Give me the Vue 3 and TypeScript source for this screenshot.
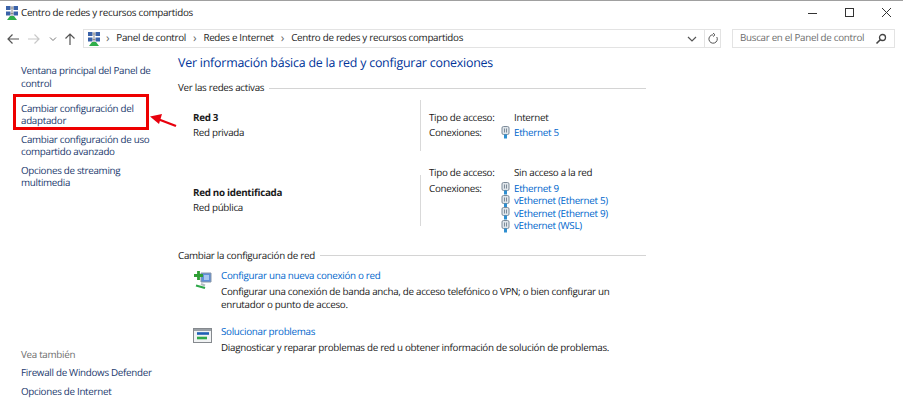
<template>
  <div class="window">
    <header class="titlebar">
      <svg class="net-icon" width="16" height="16" viewBox="0 0 16 16">
        <rect x="2" y="1" width="4.5" height="4" fill="#3a62a8" />
        <rect x="9.5" y="1" width="4.5" height="4" fill="#3a62a8" />
        <rect x="2" y="6.5" width="4.5" height="4" fill="#3a62a8" />
        <rect x="9.5" y="6.5" width="4.5" height="4" fill="#3a62a8" />
        <path d="M8 1v10M6.5 3h3M6.5 8.5h3" stroke="#8a8a8a" fill="none" />
        <path d="M6 11h4l3 4H3z" fill="#2fae4a" />
      </svg>
      <span class="title">Centro de redes y recursos compartidos</span>
      <div class="win-buttons">
        <svg width="12" height="12" viewBox="0 0 12 12"><path d="M1 6.5h9" stroke="#333" fill="none" /></svg>
        <svg width="12" height="12" viewBox="0 0 12 12"><rect x="1.5" y="1.5" width="8" height="8" stroke="#333" fill="none" /></svg>
        <svg width="12" height="12" viewBox="0 0 12 12"><path d="M1 1l9 9M10 1l-9 9" stroke="#333" fill="none" /></svg>
      </div>
    </header>

    <nav class="navbar">
      <div class="nav-arrows">
        <svg width="14" height="14" viewBox="0 0 14 14"><path d="M13 7H2M6.5 2.5L2 7l4.5 4.5" stroke="#555" stroke-width="1.2" fill="none" /></svg>
        <svg width="14" height="14" viewBox="0 0 14 14"><path d="M1 7h11M7.5 2.5L12 7l-4.5 4.5" stroke="#c8c8c8" stroke-width="1.2" fill="none" /></svg>
        <svg class="small-chev" width="8" height="8" viewBox="0 0 8 8"><path d="M1 2.5l3 3 3-3" stroke="#777" fill="none" /></svg>
        <svg width="14" height="14" viewBox="0 0 14 14"><path d="M7 13V2M2.5 6.5L7 2l4.5 4.5" stroke="#555" stroke-width="1.2" fill="none" /></svg>
      </div>
      <div class="address">
        <svg class="addr-icon" width="16" height="16" viewBox="0 0 16 16">
          <rect x="2" y="1" width="4.5" height="4" fill="#3a62a8" />
          <rect x="9.5" y="1" width="4.5" height="4" fill="#3a62a8" />
          <rect x="2" y="6.5" width="4.5" height="4" fill="#3a62a8" />
          <rect x="9.5" y="6.5" width="4.5" height="4" fill="#3a62a8" />
          <path d="M8 1v10M6.5 3h3M6.5 8.5h3" stroke="#8a8a8a" fill="none" />
          <path d="M6 11h4l3 4H3z" fill="#2fae4a" />
        </svg>
        <template v-for="crumb in crumbs" :key="crumb">
          <span class="crumb-sep">›</span>
          <span class="crumb">{{ crumb }}</span>
        </template>
        <svg class="addr-chev" width="10" height="8" viewBox="0 0 10 8"><path d="M1 2l4 4 4-4" stroke="#555" stroke-width="1.2" fill="none" /></svg>
        <span class="refresh">
          <svg width="12" height="12" viewBox="0 0 12 12"><path d="M9.8 4A4.2 4.2 0 1 1 6 1.8M6 0l2 1.8L6 3.6" stroke="#555" fill="none" /></svg>
        </span>
      </div>
      <div class="search">
        <span>Buscar en el Panel de control</span>
        <svg width="12" height="12" viewBox="0 0 12 12"><circle cx="7.5" cy="4.5" r="3" stroke="#444" stroke-width="1.3" fill="none" /><path d="M5.3 6.7L1.5 10.5" stroke="#444" stroke-width="1.6" /></svg>
      </div>
    </nav>

    <div class="body">
      <aside class="sidebar">
        <div class="side-top">
          <a v-for="link in sideLinks" :key="link" class="side-link">{{ link }}</a>
        </div>
        <div class="side-bottom">
          <span class="see-also">Vea también</span>
          <a class="side-link">Firewall de Windows Defender</a>
          <a class="side-link">Opciones de Internet</a>
        </div>
      </aside>

      <main class="content">
        <h1>Ver información básica de la red y configurar conexiones</h1>

        <div class="section-head"><span>Ver las redes activas</span><i></i></div>

        <section class="network first">
          <div class="net-name">
            <strong>Red 3</strong>
            <span>Red privada</span>
          </div>
          <div class="net-info">
            <span>Tipo de acceso:</span><span>Internet</span>
            <span>Conexiones:</span>
            <div class="conns">
              <a class="conn">
                <svg width="9" height="13" viewBox="0 0 9 13"><rect x="1" y="0.5" width="7" height="8" rx="1.5" fill="#dfe5ea" stroke="#7d8b99" /><path d="M3.5 2.5v4M5.5 2.5v4" stroke="#7d8b99" /><path d="M4.5 8.5v4" stroke="#2f8fd0" stroke-width="3" /></svg>
                Ethernet 5
              </a>
            </div>
          </div>
        </section>

        <section class="network second">
          <div class="net-name">
            <strong>Red no identificada</strong>
            <span>Red pública</span>
          </div>
          <div class="net-info">
            <span>Tipo de acceso:</span><span>Sin acceso a la red</span>
            <span>Conexiones:</span>
            <div class="conns">
              <a v-for="c in connections" :key="c" class="conn">
                <svg width="9" height="13" viewBox="0 0 9 13"><rect x="1" y="0.5" width="7" height="8" rx="1.5" fill="#dfe5ea" stroke="#7d8b99" /><path d="M3.5 2.5v4M5.5 2.5v4" stroke="#7d8b99" /><path d="M4.5 8.5v4" stroke="#2f8fd0" stroke-width="3" /></svg>
                {{ c }}
              </a>
            </div>
          </div>
        </section>

        <div class="section-head change"><span>Cambiar la configuración de red</span><i></i></div>

        <div class="task">
          <svg width="20" height="20" viewBox="0 0 20 20">
            <path d="M8 3h10v9H8z" fill="#5f8fd8" stroke="#8a97a8" />
            <path d="M11 5h5v5h-5z" fill="#a8c6ee" />
            <path d="M8 14l4 1.5" stroke="#b5bcc4" stroke-width="2" />
            <path d="M3 15.5l9 2.5" stroke="#2fa84a" stroke-width="2.2" />
            <path d="M5.5 1v9M1 5.5h9" stroke="#2f9e35" stroke-width="2.8" />
          </svg>
          <div>
            <a class="task-link">Configurar una nueva conexión o red</a>
            <p>Configurar una conexión de banda ancha, de acceso telefónico o VPN; o bien configurar un<br />enrutador o punto de acceso.</p>
          </div>
        </div>

        <div class="task">
          <svg width="20" height="20" viewBox="0 0 20 20">
            <rect x="0.5" y="2.5" width="18" height="14" fill="#f1f3f4" stroke="#85898e" />
            <rect x="1" y="3" width="17" height="2" fill="#9aa0a6" />
            <path d="M4 7.5h12" stroke="#1f5fb5" stroke-width="2.6" />
            <path d="M4 12h10" stroke="#2fa84a" stroke-width="2.6" />
          </svg>
          <div>
            <a class="task-link">Solucionar problemas</a>
            <p>Diagnosticar y reparar problemas de red u obtener información de solución de problemas.</p>
          </div>
        </div>
      </main>
    </div>

    <!-- Resaltado de la captura -->
    <div class="highlight"></div>
    <svg class="arrow" width="30" height="16" viewBox="0 0 30 16">
      <path d="M27 13L10 6.5" stroke="#e8000d" stroke-width="2.4" fill="none" />
      <path d="M1 3.5L13 1l-3 10z" fill="#e8000d" />
    </svg>
  </div>
</template>

<script setup lang="ts">
const crumbs: string[] = ['Panel de control', 'Redes e Internet', 'Centro de redes y recursos compartidos']

const sideLinks: string[] = [
  'Ventana principal del Panel de control',
  'Cambiar configuración del adaptador',
  'Cambiar configuración de uso compartido avanzado',
  'Opciones de streaming multimedia'
]

const connections: string[] = ['Ethernet 9', 'vEthernet (Ethernet 5)', 'vEthernet (Ethernet 9)', 'vEthernet (WSL)']
</script>

<style>
html,
body {
  margin: 0;
  background: #fff;
}
</style>

<style scoped>
.window {
  position: relative;
  width: 903px;
  height: 406px;
  overflow: hidden;
  background: #fff;
  border-top: 1px solid #a0a0a0;
  box-sizing: border-box;
  font-family: "Open Sans", "Noto Sans", sans-serif;
  font-size: 9.8px;
  line-height: 12.5px;
  letter-spacing: -0.29px;
  text-rendering: geometricPrecision;
  color: #1a1a1a;
}

.titlebar {
  display: flex;
  align-items: center;
  height: 24px;
  padding-left: 4px;
}

.title {
  margin-left: 1px;
}

.win-buttons {
  display: flex;
  gap: 25px;
  margin-left: auto;
  padding-right: 10px;
}

.navbar {
  display: flex;
  align-items: center;
  height: 19px;
  margin-top: 4px;
}

.nav-arrows {
  display: flex;
  align-items: center;
  gap: 7px;
  width: 83px;
  padding-left: 6px;
  box-sizing: border-box;
}

.small-chev {
  margin: 0 -1px 0 1px;
}

.address {
  display: flex;
  align-items: center;
  width: 638px;
  height: 19px;
  box-sizing: border-box;
  border: 1px solid #e3e3e3;
  color: #222;
}

.addr-icon {
  margin: 0 -3px 0 2px;
}

.crumb-sep {
  margin: 0 7px;
  color: #666;
  font-size: 12px;
}

.addr-chev {
  margin-left: auto;
  margin-right: 7px;
}

.refresh {
  display: flex;
  align-items: center;
  justify-content: center;
  width: 15px;
  height: 17px;
  border-left: 1px solid #e3e3e3;
}

.search {
  display: flex;
  align-items: center;
  justify-content: space-between;
  width: 163px;
  height: 19px;
  margin-left: 11px;
  padding: 0 7px;
  box-sizing: border-box;
  border: 1px solid #e3e3e3;
  color: #6d6d6d;
  white-space: nowrap;
}

.body {
  display: flex;
  height: 358px;
}

.sidebar {
  display: flex;
  flex-direction: column;
  justify-content: space-between;
  width: 178px;
  padding: 17px 26px 8px 21px;
  box-sizing: border-box;
}

.side-top {
  display: flex;
  flex-direction: column;
  gap: 6px;
}

.side-top .side-link:nth-child(2) {
  margin-top: 6.5px;
}

.side-link {
  color: #1c3a6e;
}

.side-bottom {
  display: flex;
  flex-direction: column;
  gap: 6px;
}

.see-also {
  color: #6d6d6d;
}

.content {
  width: 468px;
  padding-top: 6px;
}

h1 {
  margin: 0 0 10px;
  font-size: 12.4px;
  line-height: 18px;
  font-weight: 400;
  letter-spacing: -0.21px;
  color: #003399;
}

.section-head {
  display: flex;
  align-items: center;
  gap: 5px;
}

.section-head i {
  flex: 1;
  height: 1px;
  background: #d4d4d4;
}

.section-head.change {
  margin-top: 17px;
}

.network {
  display: flex;
  padding-left: 15px;
}

.network.first {
  margin-top: 5px;
}

.network.second {
  margin-top: 16px;
}

.net-name {
  display: flex;
  flex-direction: column;
  gap: 3px;
  width: 227px;
}

.first .net-name {
  padding-top: 12px;
}

.net-name strong {
  font-weight: 700;
}

.second .net-name {
  padding-top: 20px;
}

.net-info {
  position: relative;
  display: grid;
  grid-template-columns: 85px 1fr;
  grid-auto-rows: min-content;
  row-gap: 3.5px;
  flex: 1;
  padding-left: 9px;
}

/* Separador vertical entre nombre y datos */
.net-info::before {
  content: "";
  position: absolute;
  left: 0;
  width: 1px;
  height: 51px;
  background: #d9d9d9;
}

.first .net-info {
  height: 51px;
  padding-top: 12px;
  box-sizing: border-box;
  row-gap: 2.5px;
}

.first .net-info::before {
  top: 0;
}

.second .net-info::before {
  top: 8px;
}

.conns {
  display: flex;
  flex-direction: column;
  margin-left: -13px;
}

.conn {
  display: flex;
  align-items: center;
  gap: 4px;
  height: 12.5px;
  color: #0066cc;
}

.task {
  display: flex;
  gap: 8px;
  padding-left: 15px;
  margin-top: 8px;
}

.task + .task {
  margin-top: 15px;
}

.task svg {
  flex-shrink: 0;
}

.task-link {
  display: block;
  color: #0066cc;
}

.task p {
  margin: 3.5px 0 0;
  white-space: nowrap;
}

.highlight {
  position: absolute;
  left: 13px;
  top: 93px;
  width: 136px;
  height: 36px;
  box-sizing: border-box;
  border: 3px solid #ee0000;
}

.arrow {
  position: absolute;
  left: 149px;
  top: 112px;
}
</style>
